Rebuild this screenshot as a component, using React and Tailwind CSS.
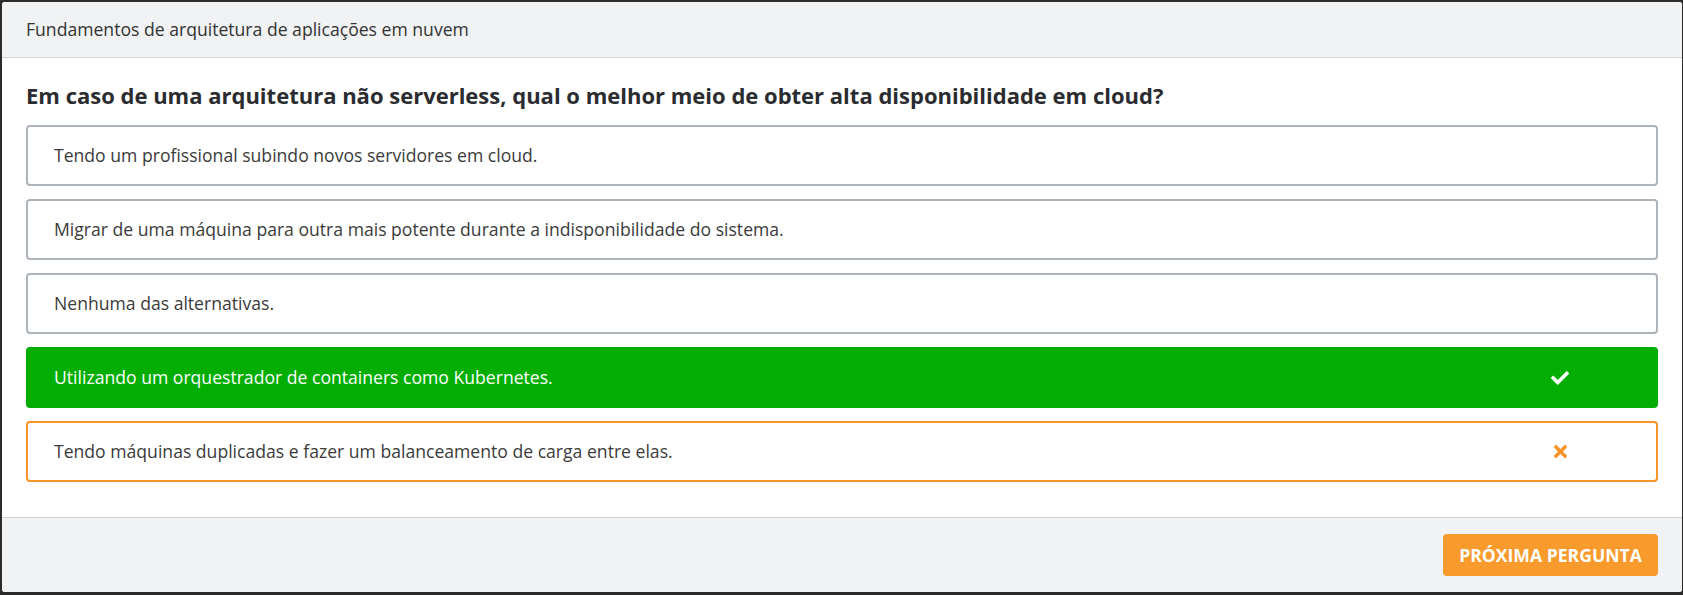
import { FaCheck, FaTimes } from 'react-icons/fa';

const options = [
  { text: 'Tendo um profissional subindo novos servidores em cloud.', state: 'idle' },
  { text: 'Migrar de uma máquina para outra mais potente durante a indisponibilidade do sistema.', state: 'idle' },
  { text: 'Nenhuma das alternativas.', state: 'idle' },
  { text: 'Utilizando um orquestrador de containers como Kubernetes.', state: 'right' },
  { text: 'Tendo máquinas duplicadas e fazer um balanceamento de carga entre elas.', state: 'wrong' }
];

function Option({ text, state }) {
  const base = 'flex items-center justify-between rounded-[4px] border-2 pl-[26px] pr-6 h-[61px] text-[17.6px]';
  const styles = {
    idle: 'border-[#adb4bc] bg-white text-[#3b3b3b]',
    right: 'border-[#02ae02] bg-[#02ae02] text-white',
    wrong: 'border-[#f7942a] bg-white text-[#3b3b3b]'
  };

  return (
    <div className={`${base} ${styles[state]}`}>
      <span>{text}</span>
      <div className="w-[144px] flex justify-center">
        {state === 'right' && <FaCheck className="text-white w-[18px] h-[18px]" />}
        {state === 'wrong' && <FaTimes className="text-[#f7942a] w-[19px] h-[19px]" />}
      </div>
    </div>
  );
}

export default function App() {
  return (
    <div className="w-[1683px] h-[595px] bg-[#2b2b2b] pt-[2px] pl-[2px] pr-[1px] pb-[3px]" style={{ fontFamily: '"Open Sans", "Noto Sans", sans-serif' }}>
      <div className="h-full flex flex-col bg-white rounded-[3px] overflow-hidden">
        <div className="bg-[#f1f2f4] border-b border-[#cfd2d7] px-6 h-[56px] flex items-center text-[17.6px] text-[#333]">
          Fundamentos de arquitetura de aplicações em nuvem
        </div>
        <div className="flex-1 px-6 pt-[22px]">
          <h1 className="text-[22px] leading-[30px] font-bold text-[#2a2c30] mb-[15px]">
            Em caso de uma arquitetura não serverless, qual o melhor meio de obter alta disponibilidade em cloud?
          </h1>
          <div className="flex flex-col gap-[13px]">
            {options.map((option, index) => (
              <Option key={index} text={option.text} state={option.state} />
            ))}
          </div>
        </div>
        <div className="bg-[#f1f2f4] border-t border-[#cfd2d7] h-[75px] flex items-center justify-end px-6">
          <button className="bg-[#f99a2c] text-white font-bold text-[17.6px] rounded-[4px] w-[215px] h-[42px] uppercase">
            Próxima pergunta
          </button>
        </div>
      </div>
    </div>
  );
}
